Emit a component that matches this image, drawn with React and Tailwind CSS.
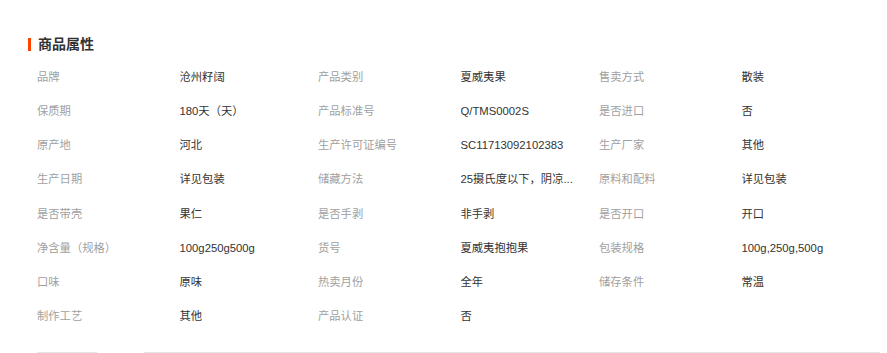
import React from "react";

const rows = [
  [["品牌", "沧州籽阔"], ["产品类别", "夏威夷果"], ["售卖方式", "散装"]],
  [["保质期", "180天（天）"], ["产品标准号", "Q/TMS0002S"], ["是否进口", "否"]],
  [["原产地", "河北"], ["生产许可证编号", "SC11713092102383"], ["生产厂家", "其他"]],
  [["生产日期", "详见包装"], ["储藏方法", "25摄氏度以下，阴凉..."], ["原料和配料", "详见包装"]],
  [["是否带壳", "果仁"], ["是否手剥", "非手剥"], ["是否开口", "开口"]],
  [["净含量（规格）", "100g250g500g"], ["货号", "夏威夷抱抱果"], ["包装规格", "100g,250g,500g"]],
  [["口味", "原味"], ["热卖月份", "全年"], ["储存条件", "常温"]],
  [["制作工艺", "其他"], ["产品认证", "否"], null],
];

export default function App() {
  return (
    <div
      className="w-[887px] h-[353px] bg-white overflow-hidden flex flex-col"
      style={{ fontFamily: '"Liberation Sans", "Noto Sans CJK SC", sans-serif' }}
    >
      <div className="flex items-center pt-[34px] pl-[28px] h-[54px]">
        <div className="w-[3px] h-[13px] bg-[#ff4400]" />
        <div className="ml-[7px] text-[14px] leading-[20px] font-bold text-[#333]">商品属性</div>
      </div>
      <div className="mt-[6px] pl-[37px] flex flex-col">
        {rows.map((row, i) => (
          <div key={i} className="flex h-[34.15px] items-center">
            {row.map((cell, j) =>
              cell ? (
                <div key={j} className="flex w-[281px] text-[11.3px] leading-[16px]">
                  <div className="w-[142.5px] text-[#9f9f9f] whitespace-nowrap">{cell[0]}</div>
                  <div className="flex-1 text-[#333] whitespace-nowrap overflow-hidden">{cell[1]}</div>
                </div>
              ) : (
                <div key={j} className="w-[281px]" />
              )
            )}
          </div>
        ))}
      </div>
      <div className="flex-1" />
      <div className="flex h-[1px] mb-0">
        <div className="ml-[37px] w-[60px] bg-[#e6e6e6]" />
        <div className="ml-[47px] w-[736px] bg-[#e6e6e6]" />
      </div>
    </div>
  );
}
